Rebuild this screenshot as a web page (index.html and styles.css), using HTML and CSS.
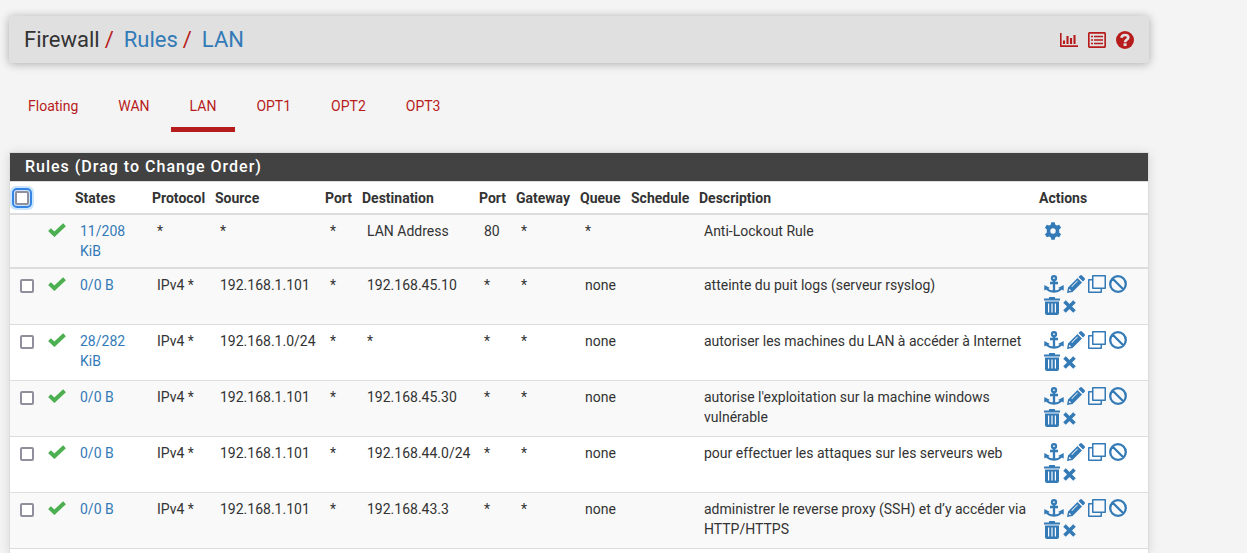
FILE: index.html
```html
<!DOCTYPE html>
<html lang="en">
<head>
<meta charset="utf-8">
<title>Firewall: Rules: LAN</title>
<link rel="stylesheet" href="styles.css">
</head>
<body>
<svg class="sprite" aria-hidden="true">
  <symbol id="i-check" viewBox="0 0 18 14"><path d="M1.500 6.600 6.400 11.300 16.500 1.700" fill="none" stroke="currentColor" stroke-width="4"/></symbol>
  <symbol id="i-anchor" viewBox="0 0 20 18"><g fill="none" stroke="currentColor" stroke-width="2.300"><circle cx="10" cy="3.200" r="2"/><path d="M10 5v12M6 8h8M2.500 12.500c1 3 4 4 7.500 4s6.500-1 7.500-4"/></g><path d="M.3 15.500V10L6 13zM19.700 15.500V10L14 13z" fill="currentColor"/></symbol>
  <symbol id="i-pencil" viewBox="0 0 18 18"><path fill="currentColor" fill-rule="evenodd" d="M0 18 1 12.500 10.500 3 15 7.500 5.500 17zM11.500 2 13 .5q1-1 2 0L17.500 3q1 1 0 2L16 6.500zM2.300 13.700 1.900 16.100 4.300 15.700zM4.400 11.400 10.300 5.500l.6.600L5 12z"/></symbol>
  <symbol id="i-clone" viewBox="0 0 18 18"><path d="M4.750.75h12.500v12.500H4.750zM4.500 4.750H.75v12.500h12.500V13.500" fill="none" stroke="currentColor" stroke-width="1.500" stroke-linejoin="round"/></symbol>
  <symbol id="i-ban" viewBox="0 0 18 18"><path d="M3.500 3.500l11 11M9 1.200a7.800 7.800 0 1 0 0 15.600a7.800 7.800 0 1 0 0-15.600z" fill="none" stroke="currentColor" stroke-width="2.300"/></symbol>
  <symbol id="i-trash" viewBox="0 0 16 18"><path fill="currentColor" fill-rule="evenodd" d="M0 1.500h5V.5Q5 0 5.500 0h5q.5 0 .5.500v1h5v2H0zM1 4.500h14V16q0 2-2 2H3q-2 0-2-2zM4 6.500v9h1.200v-9zM7.400 6.500v9h1.200v-9zM10.800 6.500v9h1.200v-9z"/></symbol>
  <symbol id="i-times" viewBox="0 0 13 18"><path d="M1.500 4.500l10 10M11.500 4.500l-10 10" stroke="currentColor" stroke-width="3.600"/></symbol>
  <symbol id="i-cog" viewBox="0 0 18 18"><path fill="currentColor" fill-rule="evenodd" d="M7.300.2h3.400l.5 2.400 1.500.9 2.500-.8 1.900 3.100-1.900 1.700v3l1.900 1.700-1.900 3.100-2.500-.8-1.500.9-.5 2.400H7.300l-.5-2.400-1.500-.9-2.500.8L.9 12.200l1.900-1.700v-3L.9 5.800l1.900-3.100 2.500.8 1.500-.9zM9 6.300a2.700 2.700 0 1 0 0 5.400a2.700 2.700 0 1 0 0-5.400z"/></symbol>
  <symbol id="i-chart" viewBox="0 0 18 14"><path d="M.8 0v13.100H18" fill="none" stroke="currentColor" stroke-width="1.600"/><path d="M4 11V7.500M7.500 11V3M11 11V5M14.500 11V2" stroke="currentColor" stroke-width="2.100"/></symbol>
  <symbol id="i-list" viewBox="0 0 18 16"><rect x=".8" y=".8" width="16.400" height="14.400" rx="1" fill="none" stroke="currentColor" stroke-width="1.700"/><path d="M3 4.500h2M3 8h2M3 11.500h2M6 4.500h9M6 8h9M6 11.500h9" stroke="currentColor" stroke-width="1.700"/></symbol>
  <symbol id="i-help" viewBox="0 0 18 18"><circle cx="9" cy="9" r="9" fill="currentColor"/><path d="M5.400 6.800C5.800 4.600 7.300 4 8.900 4c1.900 0 3.400 1 3.400 2.600 0 2.300-3.200 2-3.200 4.600" fill="none" stroke="#e0e0e0" stroke-width="2.700"/><path d="M7.600 12.300h3v2.700h-3z" fill="#e0e0e0"/></symbol>
</svg>
<div class="navbar"></div>
<div class="container">
  <header class="page-header">
    <ol class="breadcrumb">
      <li>Firewall</li><li><a href="#">Rules</a></li><li><a href="#">LAN</a></li>
    </ol>
    <nav class="shortcuts">
      <a href="#" aria-label="Status"><svg class="icon-chart"><use href="#i-chart"/></svg></a>
      <a href="#" aria-label="Logs"><svg class="icon-list"><use href="#i-list"/></svg></a>
      <a href="#" aria-label="Help"><svg class="icon"><use href="#i-help"/></svg></a>
    </nav>
  </header>
  <nav class="tabs">
    <a href="#">Floating</a><a href="#">WAN</a><a href="#" class="active">LAN</a><a href="#">OPT1</a><a href="#">OPT2</a><a href="#">OPT3</a>
  </nav>
  <section class="panel">
    <h2>Rules (Drag to Change Order)</h2>
    <table>
      <colgroup><col class="c-box"><col class="c-check"><col class="c-states"><col class="c-proto"><col class="c-source"><col class="c-port"><col class="c-dest"><col class="c-port"><col class="c-gateway"><col class="c-queue"><col class="c-sched"><col><col class="c-actions"></colgroup>
      <thead>
        <tr><th><input type="checkbox" class="select-all" aria-label="Select all"></th><th></th><th>States</th><th>Protocol</th><th>Source</th><th>Port</th><th>Destination</th><th>Port</th><th>Gateway</th><th>Queue</th><th>Schedule</th><th>Description</th><th>Actions</th></tr>
      </thead>
      <tbody>
        <tr class="lockout"><td></td><td><svg class="pass"><use href="#i-check"/></svg></td><td><a href="#">11/208 KiB</a></td><td>*</td><td>*</td><td>*</td><td>LAN Address</td><td>80</td><td>*</td><td>*</td><td></td><td>Anti-Lockout Rule</td><td><a href="#" aria-label="Settings"><svg class="icon"><use href="#i-cog"/></svg></a></td></tr>
      </tbody>
      <tbody id="rules"></tbody>
    </table>
  </section>
</div>
<script src="rules.js"></script>
</body>
</html>
```
FILE: styles.css
```css
* { box-sizing: border-box; }
body { margin: 0; background: #f4f4f4; color: #333; font: 14px/20px Roboto, "Liberation Sans", sans-serif; }
a { color: #337ab7; text-decoration: none; }
svg { display: block; }
.sprite { position: absolute; width: 0; height: 0; }
.navbar { max-width: 1140px; margin-left: 9px; height: 0; box-shadow: 0 0 4px rgba(0, 0, 0, .3); }
.container { max-width: 1140px; margin: 16px 9px 0; }
.page-header { display: flex; align-items: center; justify-content: space-between; padding: 0 15px; height: 47px; background: #e0e0e0; border-radius: 3px; box-shadow: 0 1px 10px rgba(0, 0, 0, .3); }
.breadcrumb { display: flex; margin: 0; padding: 0; list-style: none; font-size: 22px; line-height: 30px; }
.breadcrumb li + li::before { content: "/"; color: #b71c1c; padding: 0 10px 0 5px; }
.shortcuts { display: flex; align-items: center; gap: 10px; }
.shortcuts a { color: #b71c1c; }
.icon { width: 18px; height: 18px; }
.icon-chart { width: 18px; height: 14px; }
.icon-list { width: 18px; height: 16px; }
.tabs { display: flex; gap: 2px; margin-top: 23px; }
.tabs a { padding: 10px 19px 11px; color: #b71c1c; border-bottom: 5px solid transparent; }
.tabs .active { border-bottom-color: #b71c1c; }
.panel { margin-top: 20px; padding-bottom: 4px; background: #fff; border: 1px solid #ddd; border-bottom: 0; box-shadow: 0 1px 10px rgba(0, 0, 0, .12); }
.panel h2 { margin: 0; padding: 4px 15px; font-size: 16px; line-height: 20px; font-weight: 500; letter-spacing: 1px; color: #fff; background: #424242; border-bottom: 1px solid #ddd; }
table { width: 100%; table-layout: fixed; border-spacing: 0; border-bottom: 1px solid #ddd; }
th { padding: 6px 0 5px 5px; text-align: left; font-weight: 700; border-bottom: 2px solid #ddd; }
td { padding: 6px 4px 5px 10px; vertical-align: top; border-top: 1px solid #ddd; }
.lockout td { padding-bottom: 6px; border-top: 0; background: #f9f9f9; }
.lockout .icon { margin-top: 1px; }
#rules tr:first-child td { border-top-width: 2px; }
#rules tr:nth-child(odd) { background: #f9f9f9; }
.c-box { width: 28px; }
.c-check { width: 32px; }
.c-states { width: 77px; }
.c-proto { width: 63px; }
.c-source { width: 110px; }
.c-port { width: 37px; }
.c-dest { width: 117px; }
.c-gateway { width: 64px; }
.c-queue { width: 51px; }
.c-sched { width: 68px; }
.c-actions { width: 114px; }
input[type="checkbox"] { appearance: none; display: block; width: 14px; height: 14px; margin: 4px 0 0; border: 2px solid #8f8f9d; border-radius: 2px; background: #fff; }
input.select-all { margin: 0; outline: 2px solid #3584e4; outline-offset: 1px; box-shadow: 0 0 0 5px #cce5ff; }
.pass { width: 18px; height: 14px; margin-top: 2px; color: #4caf50; }
.actions { display: flex; flex-wrap: wrap; column-gap: 3px; }
.actions a { height: 22px; }
.anchor { width: 20px; height: 18px; }
.trash { width: 16px; height: 18px; }
.times { width: 13px; height: 18px; }
```
FILE: rules.js
```js
const rules = [
  ["0/0 B", "192.168.1.101", "192.168.45.10", "atteinte du puit logs (serveur rsyslog)"],
  ["28/282 KiB", "192.168.1.0/24", "*", "autoriser les machines du LAN à accéder à Internet"],
  ["0/0 B", "192.168.1.101", "192.168.45.30", "autorise l'exploitation sur la machine windows vulnérable"],
  ["0/0 B", "192.168.1.101", "192.168.44.0/24", "pour effectuer les attaques sur les serveurs web"],
  ["0/0 B", "192.168.1.101", "192.168.43.3", "administrer le reverse proxy (SSH) et d’y accéder via HTTP/HTTPS"]
];
const icons = [["Move", "anchor", "anchor"], ["Edit", "pencil", "icon"], ["Copy", "clone", "icon"], ["Disable", "ban", "icon"], ["Delete", "trash", "trash"], ["Clear states", "times", "times"]];
const actions = icons.map(([label, id, cls]) => `<a href="#" aria-label="${label}"><svg class="${cls}"><use href="#i-${id}"/></svg></a>`).join("");
document.getElementById("rules").innerHTML = rules.map(([states, source, dest, text]) =>
  `<tr><td><input type="checkbox" aria-label="Select rule"></td><td><svg class="pass"><use href="#i-check"/></svg></td><td><a href="#">${states}</a></td><td>IPv4 *</td><td>${source}</td><td>*</td><td>${dest}</td><td>*</td><td>*</td><td>none</td><td></td><td>${text}</td><td><div class="actions">${actions}</div></td></tr>`
).join("");
```
